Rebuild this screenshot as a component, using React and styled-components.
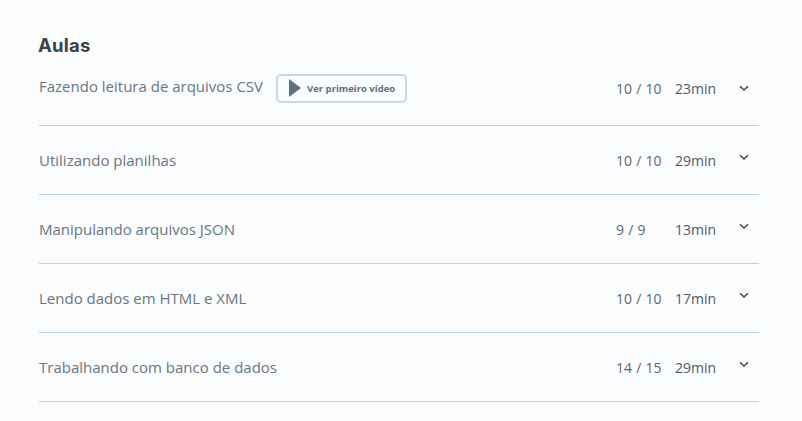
import React from 'react';
import styled, { createGlobalStyle } from 'styled-components';

const GlobalStyle = createGlobalStyle`
  html, body {
    margin: 0;
    padding: 0;
    background: #fbfcfe;
  }
`;

const lessons = [
  { title: 'Utilizando planilhas', count: '10 / 10', time: '29min' },
  { title: 'Manipulando arquivos JSON', count: '9 / 9', time: '13min' },
  { title: 'Lendo dados em HTML e XML', count: '10 / 10', time: '17min' },
  { title: 'Trabalhando com banco de dados', count: '14 / 15', time: '29min' },
];

const Chevron = () => (
  <ChevronIcon viewBox="0 0 10 7" fill="none">
    <path d="M1 1.2 5 5 9 1.2" stroke="#3d464d" strokeWidth="1.5" />
  </ChevronIcon>
);

const App = () => {
  return (
    <Page>
      <GlobalStyle />
      <Title>Aulas</Title>
      <FirstRow>
        <Left>
          <LessonTitle>Fazendo leitura de arquivos CSV</LessonTitle>
          <VideoButton>
            <PlayIcon viewBox="0 0 12 18">
              <path d="M0 0 12 9 0 18Z" fill="#5f6f7d" />
            </PlayIcon>
            Ver primeiro vídeo
          </VideoButton>
        </Left>
        <Count $lowered>10 / 10</Count>
        <Time $lowered>23min</Time>
        <ChevronSlot $lowered>
          <Chevron />
        </ChevronSlot>
      </FirstRow>
      {lessons.map(lesson => (
        <Row key={lesson.title}>
          <Left>
            <LessonTitle>{lesson.title}</LessonTitle>
          </Left>
          <Count>{lesson.count}</Count>
          <Time>{lesson.time}</Time>
          <ChevronSlot>
            <Chevron />
          </ChevronSlot>
        </Row>
      ))}
    </Page>
  );
};

const Page = styled.div`
  box-sizing: border-box;
  width: 802px;
  height: 421px;
  padding: 34px 43px 0 39px;
  overflow: hidden;
  background: #fbfcfe;
  font-family: 'Open Sans', sans-serif;
`;

const Title = styled.h2`
  margin: 0 0 13px -1px;
  font-family: Inter, sans-serif;
  font-size: 18.5px;
  line-height: 22px;
  font-weight: 700;
  letter-spacing: 0.2px;
  color: #3d4247;
`;

const Row = styled.div`
  display: flex;
  align-items: center;
  height: 69px;
  box-sizing: border-box;
  border-bottom: 1px solid #bdd3e3;
`;

const FirstRow = styled(Row)`
  padding-bottom: 22px;
  box-sizing: content-box;
  height: 34px;
`;

const Left = styled.div`
  display: flex;
  align-items: center;
  flex: 1;
`;

const LessonTitle = styled.span`
  font-size: 15px;
  color: #6a7680;
`;

const VideoButton = styled.button`
  display: flex;
  align-items: center;
  gap: 6px;
  box-sizing: border-box;
  width: 131px;
  height: 29px;
  margin: 4px 0 0 13px;
  padding: 0 0 0 11px;
  border: 2px solid #c4d8e8;
  border-radius: 5px;
  background: transparent;
  font-family: 'Open Sans', sans-serif;
  font-size: 9.5px;
  font-weight: 700;
  color: #5f6f7d;
`;

const PlayIcon = styled.svg`
  width: 12px;
  height: 18px;
`;

const Count = styled.span`
  width: 59px;
  margin-top: ${props => (props.$lowered ? '5px' : '0')};
  font-size: 14px;
  word-spacing: 0.5px;
  color: #5b6670;
`;

const Time = styled.span`
  width: 64px;
  margin-top: ${props => (props.$lowered ? '5px' : '0')};
  font-size: 14px;
  color: #4f5962;
`;

const ChevronSlot = styled.span`
  display: flex;
  width: 20px;
  margin-top: ${props => (props.$lowered ? '5px' : '-5px')};
`;

const ChevronIcon = styled.svg`
  width: 10px;
  height: 7px;
`;

export default App;
